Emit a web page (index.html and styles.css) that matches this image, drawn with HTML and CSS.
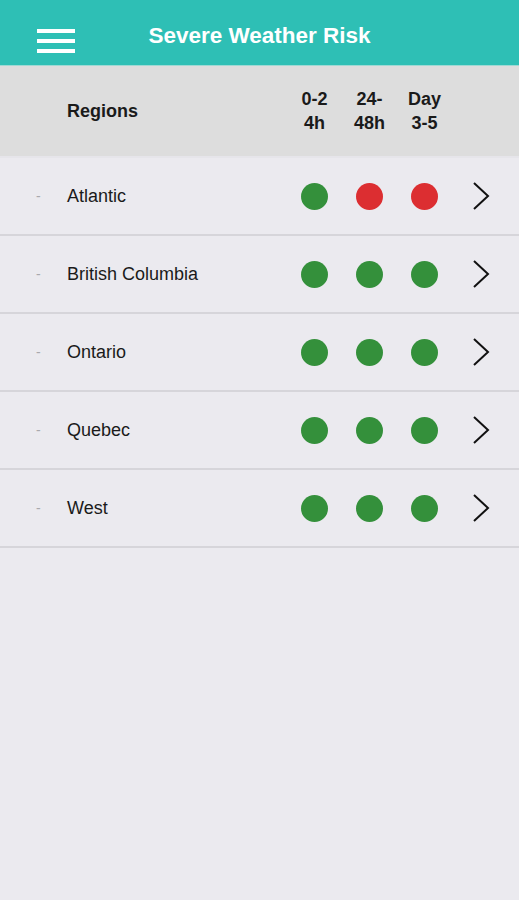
FILE: index.html
```html
<!DOCTYPE html>
<html lang="en">
<head>
	<meta charset="UTF-8">
	<title>Severe Weather Risk</title>
	<link rel="stylesheet" href="styles.css">
</head>
<body>
	<div class="topbar">
		<div class="menu">
			<span></span><span></span><span></span>
		</div>
		<h1 class="title">Severe Weather Risk</h1>
	</div>

	<div class="row head">
		<div class="dash"></div>
		<div class="name">Regions</div>
		<div class="cell">0-2<br>4h</div>
		<div class="cell">24-<br>48h</div>
		<div class="cell">Day<br>3-5</div>
		<div class="chev"></div>
	</div>

	<div class="row">
		<div class="dash">-</div>
		<div class="name">Atlantic</div>
		<div class="cell"><span class="dot green"></span></div>
		<div class="cell"><span class="dot red"></span></div>
		<div class="cell"><span class="dot red"></span></div>
		<div class="chev"><svg width="18" height="30" viewBox="0 0 18 30"><path d="M2 2 L16 15 L2 28" fill="none" stroke="#111" stroke-width="2"/></svg></div>
	</div>
	<div class="row">
		<div class="dash">-</div>
		<div class="name">British Columbia</div>
		<div class="cell"><span class="dot green"></span></div>
		<div class="cell"><span class="dot green"></span></div>
		<div class="cell"><span class="dot green"></span></div>
		<div class="chev"><svg width="18" height="30" viewBox="0 0 18 30"><path d="M2 2 L16 15 L2 28" fill="none" stroke="#111" stroke-width="2"/></svg></div>
	</div>
	<div class="row">
		<div class="dash">-</div>
		<div class="name">Ontario</div>
		<div class="cell"><span class="dot green"></span></div>
		<div class="cell"><span class="dot green"></span></div>
		<div class="cell"><span class="dot green"></span></div>
		<div class="chev"><svg width="18" height="30" viewBox="0 0 18 30"><path d="M2 2 L16 15 L2 28" fill="none" stroke="#111" stroke-width="2"/></svg></div>
	</div>
	<div class="row">
		<div class="dash">-</div>
		<div class="name">Quebec</div>
		<div class="cell"><span class="dot green"></span></div>
		<div class="cell"><span class="dot green"></span></div>
		<div class="cell"><span class="dot green"></span></div>
		<div class="chev"><svg width="18" height="30" viewBox="0 0 18 30"><path d="M2 2 L16 15 L2 28" fill="none" stroke="#111" stroke-width="2"/></svg></div>
	</div>
	<div class="row">
		<div class="dash">-</div>
		<div class="name">West</div>
		<div class="cell"><span class="dot green"></span></div>
		<div class="cell"><span class="dot green"></span></div>
		<div class="cell"><span class="dot green"></span></div>
		<div class="chev"><svg width="18" height="30" viewBox="0 0 18 30"><path d="M2 2 L16 15 L2 28" fill="none" stroke="#111" stroke-width="2"/></svg></div>
	</div>
</body>
</html>
```

FILE: styles.css
```css
body {
	margin: 0;
	background-color: #ebeaef;
	font-family: "Liberation Sans", Arial, sans-serif;
	color: #1a1a1a;
}
.topbar {
	position: relative;
	height: 65px;
	background-color: #2ebfb5;
	border-bottom: 1px solid #9fd9d4;
	display: flex;
	align-items: center;
	justify-content: center;
}
.title {
	margin: 0;
	color: #fff;
	font-size: 22.5px;
	font-weight: bold;
	padding-top: 6px;
}
.menu {
	position: absolute;
	left: 37px;
	top: 29px;
	width: 38px;
	display: flex;
	flex-direction: column;
	gap: 6px;
}
.menu span {
	display: block;
	height: 4px;
	background-color: #fff;
}
.row {
	display: flex;
	align-items: center;
	height: 76px;
	padding: 0 29px 0 36px;
	border-bottom: 2px solid #d6d5da;
}
.row.head {
	height: 90px;
	background-color: #dddddd;
	border-bottom: 2px solid #e6e5ea;
	font-weight: bold;
}
.dash {
	width: 31px;
	color: #a9a9ad;
	font-size: 14px;
}
.name {
	flex: 1;
	font-size: 18px;
}
.cell {
	width: 55px;
	text-align: center;
	font-size: 18px;
	line-height: 24px;
	display: flex;
	justify-content: center;
}
.chev {
	width: 18px;
	margin-left: 20px;
	display: flex;
}
.dot {
	display: block;
	width: 27px;
	height: 27px;
	border-radius: 50%;
}
.green {
	background-color: #34903b;
}
.red {
	background-color: #dc2e31;
}
```
